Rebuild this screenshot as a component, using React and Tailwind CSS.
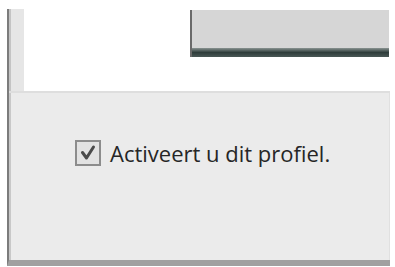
export default function App() {
  return (
    <div className="w-[395px] h-[267px] bg-white overflow-hidden pt-[9px] pl-[7px]">
      <div className="w-[383px] h-[257px] flex flex-col bg-[#ebebeb] border-l-[2px] border-[#7c7c7c] border-b-[6px] border-b-[#a0a0a0] shadow-[inset_1px_0_0_#b5b5b5]">
        <div className="flex h-[82px]">
          <div className="w-[15px] bg-[#e6e6e6] border-l-[2px] border-[#c4c4c4]" />
          <div className="flex-1 bg-white flex justify-end items-start">
            <div className="mt-[1px] mr-[1px] w-[199px] h-[47px] flex flex-col bg-[#d6d6d6] border-l-[2px] border-[#6a6a6a]">
              <div className="flex-1" />
              <div className="h-[9px] bg-gradient-to-b from-[#8a9492] via-[#2f3d3b] to-[#4a5856]" />
            </div>
          </div>
        </div>
        <div className="h-[2px] bg-[#dedede]" />
        <div className="flex-1 flex flex-col border-l-[2px] border-[#c8c8c8] border-r border-r-[#e0e0e0]">
          <div className="mt-[47px] ml-[64px] flex items-center gap-[9px]">
            <div className="w-[26px] h-[26px] border-[2px] border-[#8c8c8c] bg-[#e2e2e2] flex items-center justify-center">
              <svg width="18" height="18" viewBox="0 0 18 18">
                <path d="M3.5 8.5 L7.5 14 L14.5 3" fill="none" stroke="#4a4a4a" strokeWidth="3" strokeLinecap="round" strokeLinejoin="round" />
              </svg>
            </div>
            <span className="text-[22px] leading-none text-[#262626] font-medium" style={{ fontFamily: '"Open Sans", sans-serif' }}>
              Activeert u dit profiel.
            </span>
          </div>
        </div>
      </div>
    </div>
  );
}
